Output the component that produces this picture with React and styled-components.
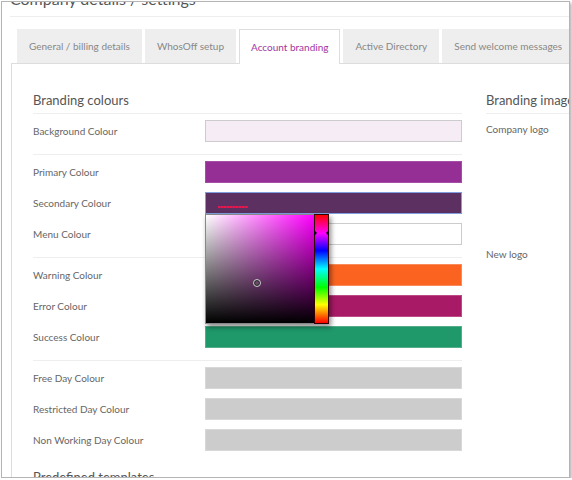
import React from "react";
import styled, { createGlobalStyle } from "styled-components";

const Global = createGlobalStyle`
  html, body { margin: 0; padding: 0; background: #fff; }
  body { font-family: Lato, "Open Sans", Arial, sans-serif; }
  * { box-sizing: border-box; }
`;

const Frame = styled.div`
  margin: 1px 0 0 1px;
  width: 569px;
  height: 477px;
  border: 1px solid #b4b4b4;
  box-shadow: 2px 2px 3px rgba(0, 0, 0, 0.28);
  overflow: hidden;
  background: #fff;
  padding-left: 8px;
`;

const Title = styled.h1`
  margin: -13px 0 0 0;
  font-size: 16px;
  line-height: 20px;
  font-weight: 400;
  color: #555;
  white-space: nowrap;
  padding-bottom: 7px;
  border-bottom: 1px solid #eee;
`;

const TabRow = styled.div`
  display: flex;
  gap: 3px;
  margin: 12px 0 0 7px;
  white-space: nowrap;
`;

const Tab = styled.div`
  flex: none;
  height: ${(p) => (p.$active ? "35px" : "34px")};
  margin-bottom: ${(p) => (p.$active ? "-1px" : "0")};
  position: relative;
  z-index: 1;
  display: flex;
  align-items: center;
  padding: 0 ${(p) => (p.$active ? "11px" : "12px")} ${(p) => (p.$active ? "1px" : "0")};
  font-size: 10px;
  color: ${(p) => (p.$active ? "#a2349f" : "#888")};
  background: ${(p) => (p.$active ? "#fff" : "#eeeeee")};
  border: ${(p) => (p.$active ? "1px solid #ddd" : "none")};
  border-bottom: none;
`;

const Panel = styled.div`
  margin-left: 1px;
  width: 700px;
  border-top: 1px solid #ddd;
  border-left: 1px solid #ddd;
  padding: 0 0 0 21px;
  display: flex;
  gap: 24px;
`;

const Column = styled.div`
  flex: none;
  width: ${(p) => p.$w}px;
`;

const Heading = styled.h2`
  margin: ${(p) => p.$top ?? 26}px 0 0 0;
  font-size: 13px;
  line-height: 20px;
  font-weight: 400;
  color: #555;
  padding-bottom: 3px;
  border-bottom: 1px solid #eee;
  white-space: nowrap;
`;

const Group = styled.div`
  display: flex;
  flex-direction: column;
  gap: 9px;
  padding: 6px 0 12px;
  border-bottom: ${(p) => (p.$last ? "none" : "1px solid #eee")};
`;

const Row = styled.div`
  display: flex;
  align-items: center;
  height: 22px;
`;

const Label = styled.div`
  width: 172px;
  flex: none;
  font-size: 10px;
  color: #666;
  white-space: nowrap;
`;

const Swatch = styled.div`
  position: relative;
  flex: 1;
  height: 22px;
  background: ${(p) => p.$bg};
  border: 1px solid ${(p) => p.$border || "#ccc"};
  display: flex;
  align-items: flex-start;
  padding: 13px 0 0 12px;
`;

const Squiggle = styled.span`
  display: block;
  width: 30px;
  height: 2px;
  background: repeating-linear-gradient(90deg, #e8144a 0 2px, #b82058 2px 3px);
`;

const Picker = styled.div`
  position: absolute;
  top: 21px;
  left: -1px;
  z-index: 5;
  width: 124px;
  height: 110px;
  display: flex;
  background: #fff;
  box-shadow: 2px 3px 5px rgba(0, 0, 0, 0.45);
`;

const SatBox = styled.div`
  position: relative;
  width: 109px;
  height: 110px;
  border: 1px solid #888;
  border-right: none;
  background:
    linear-gradient(to top, #000, rgba(0, 0, 0, 0)),
    linear-gradient(to right, #fff, #ff00ff);
`;

const SatMarker = styled.span`
  position: absolute;
  left: 47px;
  top: 64px;
  width: 8px;
  height: 8px;
  border-radius: 50%;
  border: 1px solid #c8c8c8;
  box-shadow: inset 0 0 0 1px #222;
  background: #6a4a6a;
`;

const HueBar = styled.div`
  position: relative;
  width: 15px;
  height: 110px;
  border: 1px solid #300;
  background: linear-gradient(
    to bottom,
    #ff0000 0%,
    #ff00ff 17%,
    #0000ff 33%,
    #00ffff 50%,
    #00ff00 67%,
    #ffff00 83%,
    #ff0000 100%
  );
`;

const HueArrow = styled.span`
  position: absolute;
  top: 15px;
  ${(p) => (p.$side === "left" ? "left: -1px;" : "right: -1px;")}
  width: 0;
  height: 0;
  border-top: 3px solid transparent;
  border-bottom: 3px solid transparent;
  ${(p) =>
    p.$side === "left"
      ? "border-left: 3px solid #000;"
      : "border-right: 3px solid #000;"}
`;

const SideLabel = styled.div`
  font-size: 10px;
  color: #666;
  line-height: 15px;
  height: ${(p) => p.$h}px;
  padding-top: ${(p) => p.$pt}px;
  white-space: nowrap;
`;

const groups = [
  [{ label: "Background Colour", bg: "#f6ecf6" }],
  [
    { label: "Primary Colour", bg: "#952f96", border: "#a64ea7" },
    { label: "Secondary Colour", bg: "#5c3161", border: "#7f9ee0", picker: true },
    { label: "Menu Colour", bg: "#fff" },
  ],
  [
    { label: "Warning Colour", bg: "#fb6420", border: "#f98a5a" },
    { label: "Error Colour", bg: "#a91a66", border: "#bb4a85" },
    { label: "Success Colour", bg: "#1f986a", border: "#55ad8c" },
  ],
  [
    { label: "Free Day Colour", bg: "#cccccc", border: "#d8d8d8" },
    { label: "Restricted Day Colour", bg: "#cccccc", border: "#d8d8d8" },
    { label: "Non Working Day Colour", bg: "#cccccc", border: "#d8d8d8" },
  ],
];

const tabs = [
  "General / billing details",
  "WhosOff setup",
  "Account branding",
  "Active Directory",
  "Send welcome messages",
];

export default function App() {
  return (
    <>
      <Global />
      <Frame>
        <Title>Company details / settings</Title>
        <TabRow>
          {tabs.map((t) => (
            <Tab key={t} $active={t === "Account branding"}>
              {t}
            </Tab>
          ))}
        </TabRow>
        <Panel>
          <Column $w={429}>
            <Heading>Branding colours</Heading>
            {groups.map((g, i) => (
              <Group key={i} $last={i === groups.length - 1}>
                {g.map((r) => (
                  <Row key={r.label}>
                    <Label>{r.label}</Label>
                    <Swatch $bg={r.bg} $border={r.border}>
                      {r.picker && (
                        <>
                          <Squiggle />
                          <Picker>
                            <SatBox>
                              <SatMarker />
                            </SatBox>
                            <HueBar>
                              <HueArrow $side="left" />
                              <HueArrow $side="right" />
                            </HueBar>
                          </Picker>
                        </>
                      )}
                    </Swatch>
                  </Row>
                ))}
              </Group>
            ))}
            <Heading $top={4}>Predefined templates</Heading>
          </Column>
          <Column $w={200}>
            <Heading>Branding images</Heading>
            <SideLabel $h={133} $pt={8}>Company logo</SideLabel>
            <SideLabel $h={20} $pt={0}>New logo</SideLabel>
          </Column>
        </Panel>
      </Frame>
    </>
  );
}
